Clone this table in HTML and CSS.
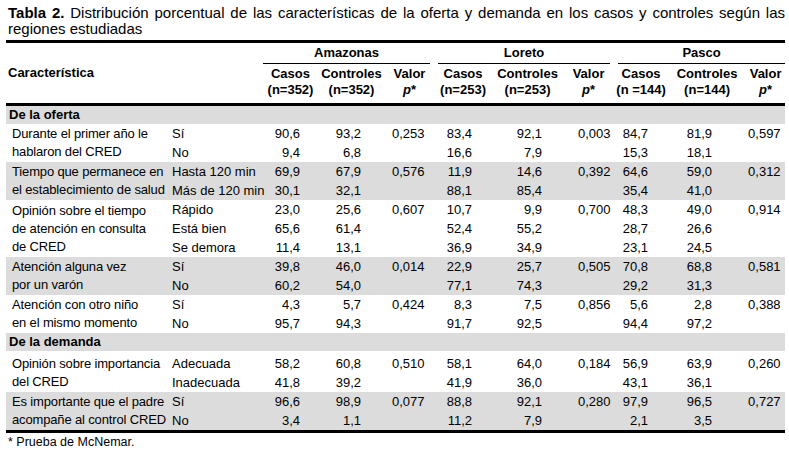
FILE: index.html
```html
<!DOCTYPE html>
<html lang="es">
<head>
<meta charset="utf-8">
<title>Tabla 2</title>
<link rel="stylesheet" href="styles.css">
</head>
<body>
<div class="page">
  <p class="title"><b>Tabla 2.</b> Distribución porcentual de las características de la oferta y demanda en los casos y controles según las regiones estudiadas</p>
  <table class="t">
    <colgroup>
      <col class="w-char"><col class="w-opt">
      <col class="w-a1"><col class="w-a2"><col class="w-a3">
      <col class="w-l1"><col class="w-l2"><col class="w-l3">
      <col class="w-p1"><col class="w-p2"><col class="w-p3">
    </colgroup>
    <thead>
      <tr class="h1">
        <th rowspan="2" colspan="2" class="char">Característica</th>
        <th colspan="3" class="region r-a"><div>Amazonas</div></th>
        <th colspan="3" class="region r-l"><div>Loreto</div></th>
        <th colspan="3" class="region r-p"><div>Pasco</div></th>
      </tr>
      <tr class="h2">
        <th>Casos<br>(n=352)</th><th>Controles<br>(n=352)</th><th>Valor<br><i>p</i>*</th>
        <th>Casos<br>(n=253)</th><th>Controles<br>(n=253)</th><th>Valor<br><i>p</i>*</th>
        <th>Casos<br>(n =144)</th><th>Controles<br>(n=144)</th><th>Valor<br><i>p</i>*</th>
      </tr>
    </thead>
    <tbody>
      <tr class="sec"><td colspan="11">De la oferta</td></tr>

      <tr>
        <td rowspan="2" class="lab">Durante el primer año le<br>hablaron del CRED</td>
        <td class="opt">Sí</td>
        <td class="n a1">90,6</td><td class="n a2">93,2</td><td rowspan="2" class="p a3">0,253</td>
        <td class="n l1">83,4</td><td class="n l2">92,1</td><td rowspan="2" class="p l3">0,003</td>
        <td class="n p1">84,7</td><td class="n p2">81,9</td><td rowspan="2" class="p p3">0,597</td>
      </tr>
      <tr>
        <td class="opt">No</td>
        <td class="n a1">9,4</td><td class="n a2">6,8</td>
        <td class="n l1">16,6</td><td class="n l2">7,9</td>
        <td class="n p1">15,3</td><td class="n p2">18,1</td>
      </tr>

      <tr class="g">
        <td rowspan="2" class="lab">Tiempo que permanece en<br>el establecimiento de salud</td>
        <td class="opt">Hasta 120 min</td>
        <td class="n a1">69,9</td><td class="n a2">67,9</td><td rowspan="2" class="p a3">0,576</td>
        <td class="n l1">11,9</td><td class="n l2">14,6</td><td rowspan="2" class="p l3">0,392</td>
        <td class="n p1">64,6</td><td class="n p2">59,0</td><td rowspan="2" class="p p3">0,312</td>
      </tr>
      <tr class="g">
        <td class="opt">Más de 120 min</td>
        <td class="n a1">30,1</td><td class="n a2">32,1</td>
        <td class="n l1">88,1</td><td class="n l2">85,4</td>
        <td class="n p1">35,4</td><td class="n p2">41,0</td>
      </tr>

      <tr>
        <td rowspan="3" class="lab">Opinión sobre el tiempo<br>de atención en consulta<br>de CRED</td>
        <td class="opt">Rápido</td>
        <td class="n a1">23,0</td><td class="n a2">25,6</td><td rowspan="3" class="p a3">0,607</td>
        <td class="n l1">10,7</td><td class="n l2">9,9</td><td rowspan="3" class="p l3">0,700</td>
        <td class="n p1">48,3</td><td class="n p2">49,0</td><td rowspan="3" class="p p3">0,914</td>
      </tr>
      <tr>
        <td class="opt">Está bien</td>
        <td class="n a1">65,6</td><td class="n a2">61,4</td>
        <td class="n l1">52,4</td><td class="n l2">55,2</td>
        <td class="n p1">28,7</td><td class="n p2">26,6</td>
      </tr>
      <tr>
        <td class="opt">Se demora</td>
        <td class="n a1">11,4</td><td class="n a2">13,1</td>
        <td class="n l1">36,9</td><td class="n l2">34,9</td>
        <td class="n p1">23,1</td><td class="n p2">24,5</td>
      </tr>

      <tr class="g">
        <td rowspan="2" class="lab">Atención alguna vez<br>por un varón</td>
        <td class="opt">Sí</td>
        <td class="n a1">39,8</td><td class="n a2">46,0</td><td rowspan="2" class="p a3">0,014</td>
        <td class="n l1">22,9</td><td class="n l2">25,7</td><td rowspan="2" class="p l3">0,505</td>
        <td class="n p1">70,8</td><td class="n p2">68,8</td><td rowspan="2" class="p p3">0,581</td>
      </tr>
      <tr class="g">
        <td class="opt">No</td>
        <td class="n a1">60,2</td><td class="n a2">54,0</td>
        <td class="n l1">77,1</td><td class="n l2">74,3</td>
        <td class="n p1">29,2</td><td class="n p2">31,3</td>
      </tr>

      <tr>
        <td rowspan="2" class="lab">Atención con otro niño<br>en el mismo momento</td>
        <td class="opt">Sí</td>
        <td class="n a1">4,3</td><td class="n a2">5,7</td><td rowspan="2" class="p a3">0,424</td>
        <td class="n l1">8,3</td><td class="n l2">7,5</td><td rowspan="2" class="p l3">0,856</td>
        <td class="n p1">5,6</td><td class="n p2">2,8</td><td rowspan="2" class="p p3">0,388</td>
      </tr>
      <tr>
        <td class="opt">No</td>
        <td class="n a1">95,7</td><td class="n a2">94,3</td>
        <td class="n l1">91,7</td><td class="n l2">92,5</td>
        <td class="n p1">94,4</td><td class="n p2">97,2</td>
      </tr>

      <tr class="sec"><td colspan="11">De la demanda</td></tr>

      <tr class="gap">
        <td rowspan="2" class="lab">Opinión sobre importancia<br>del CRED</td>
        <td class="opt">Adecuada</td>
        <td class="n a1">58,2</td><td class="n a2">60,8</td><td rowspan="2" class="p a3">0,510</td>
        <td class="n l1">58,1</td><td class="n l2">64,0</td><td rowspan="2" class="p l3">0,184</td>
        <td class="n p1">56,9</td><td class="n p2">63,9</td><td rowspan="2" class="p p3">0,260</td>
      </tr>
      <tr>
        <td class="opt">Inadecuada</td>
        <td class="n a1">41,8</td><td class="n a2">39,2</td>
        <td class="n l1">41,9</td><td class="n l2">36,0</td>
        <td class="n p1">43,1</td><td class="n p2">36,1</td>
      </tr>

      <tr class="g">
        <td rowspan="2" class="lab">Es importante que el padre<br>acompañe al control CRED</td>
        <td class="opt">Sí</td>
        <td class="n a1">96,6</td><td class="n a2">98,9</td><td rowspan="2" class="p a3">0,077</td>
        <td class="n l1">88,8</td><td class="n l2">92,1</td><td rowspan="2" class="p l3">0,280</td>
        <td class="n p1">97,9</td><td class="n p2">96,5</td><td rowspan="2" class="p p3">0,727</td>
      </tr>
      <tr class="g">
        <td class="opt">No</td>
        <td class="n a1">3,4</td><td class="n a2">1,1</td>
        <td class="n l1">11,2</td><td class="n l2">7,9</td>
        <td class="n p1">2,1</td><td class="n p2">3,5</td>
      </tr>
    </tbody>
  </table>
  <p class="foot">* Prueba de McNemar.</p>
</div>
</body>
</html>
```
FILE: styles.css
```css
html, body {
  margin: 0;
  padding: 0;
  background: #fff;
}
body {
  font-family: "Liberation Sans", Arial, sans-serif;
  color: #000;
}
.page {
  width: 779px;
  padding: 5px 4px 0 6px;
}
.title {
  margin: 0 0 3px 2px;
  font-size: 15px;
  line-height: 16px;
  text-align: justify;
}
.t {
  width: 779px;
  table-layout: fixed;
  border-collapse: separate;
  border-spacing: 0;
  border-top: 3px solid #000;
  border-bottom: 3px solid #000;
  font-size: 13px;
}
.w-char { width: 160px; }
.w-opt { width: 97px; }
.w-a1 { width: 55px; }
.w-a2 { width: 67px; }
.w-a3 { width: 49px; }
.w-l1 { width: 58px; }
.w-l2 { width: 71px; }
.w-l3 { width: 51px; }
.w-p1 { width: 54px; }
.w-p2 { width: 78px; }
.w-p3 { width: 39px; }

th, td {
  padding: 0;
  white-space: nowrap;
}
thead th {
  font-weight: bold;
  text-align: center;
  line-height: 16px;
}
th.char {
  text-align: left;
  padding-left: 2px;
  vertical-align: middle;
  border-bottom: 3px solid #000;
}
th.region {
  padding-top: 2px;
  vertical-align: top;
}
th.region div {
  border-bottom: 1px solid #000;
  padding-bottom: 2px;
}
th.r-a { padding-right: 4px; }
th.r-l { padding-left: 4px; padding-right: 4px; }
th.r-p { padding-left: 4px; }
.h2 th {
  padding-top: 2px;
  padding-bottom: 5px;
  border-bottom: 3px solid #000;
}

tbody td {
  line-height: 19px;
  vertical-align: middle;
}
tr.sec td {
  background: #dcdcdc;
  font-weight: bold;
  padding-left: 3px;
  line-height: 18px;
}
tr.g td {
  background: #dcdcdc;
}
tr.gap td {
  padding-top: 3px;
}
tr.gap td.lab {
  padding-top: 3px;
}
td.lab {
  padding-left: 6px;
  line-height: 18px;
  letter-spacing: -0.15px;
}
td.opt {
  padding-left: 6px;
}
td.n { text-align: right; }
td.p { text-align: left; vertical-align: top; }
td.a1 { padding-right: 18px; }
td.a2 { padding-right: 24px; }
td.a3 { padding-left: 7px; }
td.l1 { padding-right: 20px; }
td.l2 { padding-right: 21px; }
td.l3 { padding-left: 15px; }
td.p1 { padding-right: 20px; }
td.p2 { padding-right: 34px; }
td.p3 { padding-left: 2px; }
.foot {
  margin: 1px 0 0 2px;
  font-size: 12.5px;
  line-height: 16px;
}
```
